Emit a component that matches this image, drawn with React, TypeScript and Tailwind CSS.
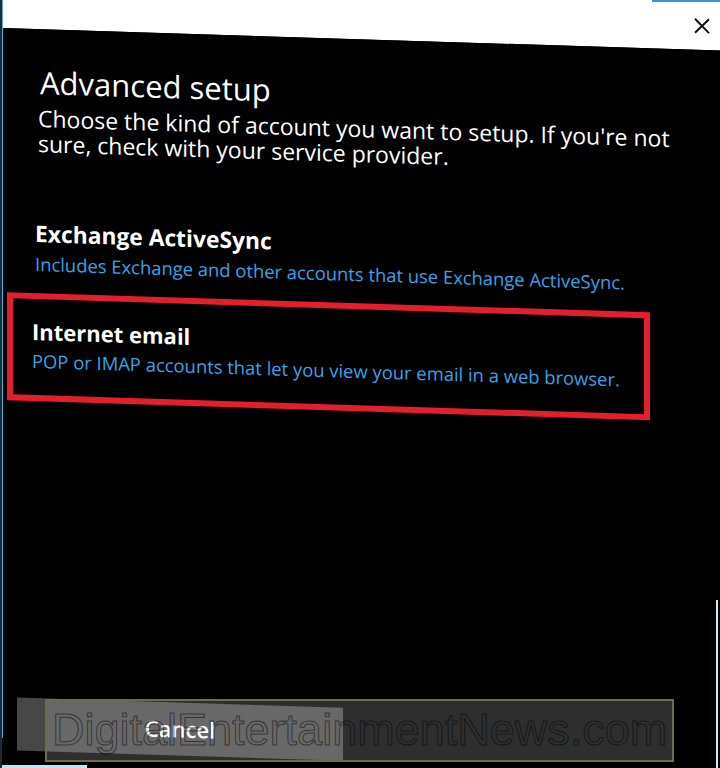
import React from "react";

export default function App() {
  return (
    <div className="relative w-[720px] h-[768px] overflow-hidden bg-black border-l-2 border-[#1d2a36]" style={{ fontFamily: '"Open Sans", "Noto Sans", sans-serif' }}>
      <div className="h-full border-l border-[#5aaede]">
        <div className="h-[798px] -mt-[30px] flex flex-col skew-y-[1.8deg] origin-top-left">
          {/* title bar */}
          <div className="h-[58px] shrink-0 bg-white flex justify-end items-start pt-[25px] pr-[9px]">
            <svg width="18" height="18" viewBox="0 0 18 18" fill="none">
              <path d="M2 2 L16 16 M16 2 L2 16" stroke="#111" strokeWidth="2" />
            </svg>
          </div>
          {/* body */}
          <div className="flex-1 flex flex-col bg-black text-white">
            <div className="pl-[37px] mt-[35px] text-[31px] leading-[36px] whitespace-nowrap">Advanced setup</div>
            <div className="pl-[35px] mt-[6px] text-[23px] leading-[25px] whitespace-nowrap">
              <div>Choose the kind of account you want to setup. If you're not</div>
              <div>sure, check with your service provider.</div>
            </div>

            <div className="pl-[32px] mt-[66px]">
              <div className="text-[22.8px] leading-[24px] font-bold whitespace-nowrap">Exchange ActiveSync</div>
              <div className="mt-[8px] text-[18.4px] leading-[20px] text-[#3aa2e6] whitespace-nowrap">Includes Exchange and other accounts that use Exchange ActiveSync.</div>
            </div>

            <div className="ml-[4px] mt-[19px] w-[643px] h-[108px] border-[6px] border-[#e41f2d] pl-[19px] pt-[20px]">
              <div className="text-[22px] leading-[24px] font-bold whitespace-nowrap">Internet email</div>
              <div className="mt-[8px] text-[18.4px] leading-[20px] text-[#3aa2e6] whitespace-nowrap">POP or IMAP accounts that let you view your email in a web browser.</div>
            </div>

            <div className="flex-1" />

            <div className="ml-[14px] mb-[18px] w-[326px] h-[53px] bg-[#474747] flex items-center justify-center text-[22px] font-semibold text-white">
              Cancel
            </div>
          </div>
        </div>
      </div>

      {/* watermark overlay */}
      <div className="absolute left-[43px] top-[699px] w-[629px] h-[63px] border-2 border-[#6d6d4c] bg-white/[0.18] pl-[5px] pt-[6px] overflow-hidden">
        <div
          className="text-[45px] leading-[45px] whitespace-nowrap text-transparent [-webkit-text-stroke:1px_rgba(0,0,0,0.5)]"
          style={{ fontFamily: '"Liberation Sans", Arial, sans-serif' }}
        >
          DigitalEntertainmentNews.com
        </div>
      </div>

      {/* edge highlights */}
      <div className="absolute left-0 bottom-0 w-[85px] h-[3px] bg-[#bfe3f7]" />
      <div className="absolute right-0 top-0 w-[68px] h-[2px] bg-[#3d8fd6]" />
      <div className="absolute right-[2px] top-[600px] w-[2px] h-[168px] bg-[#cfe8f5]" />
    </div>
  );
}
